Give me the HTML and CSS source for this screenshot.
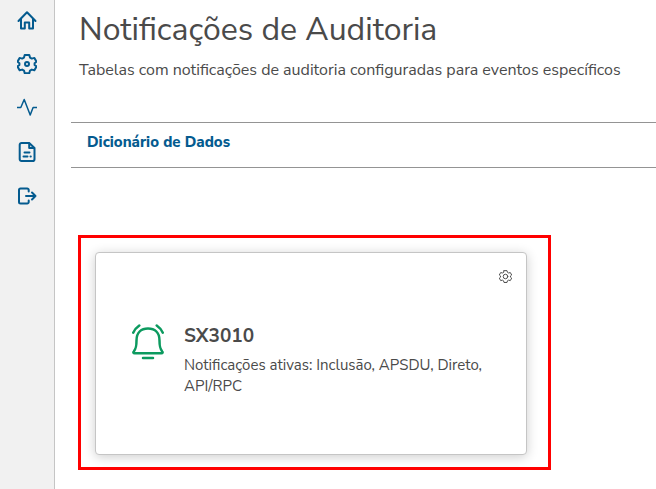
FILE: index.html
```html
<!DOCTYPE html>
<html lang="pt-BR">
<head>
  <meta charset="UTF-8">
  <meta name="viewport" content="width=device-width, initial-scale=1.0">
  <title>Notificações de Auditoria</title>
  <link rel="stylesheet" href="styles.css">
</head>
<body>
  <div class="layout">
    <nav class="sidebar">
      <a href="#" class="menu-item" aria-label="Início">
        <svg viewBox="0 0 20 20"><path d="M1.500 11 10 2.200l8.500 8.800M4 9V18.500h3.800v-6h4.400v6H16V9"/></svg>
      </a>
      <a href="#" class="menu-item" aria-label="Configurações">
        <svg viewBox="0 0 20 20"><path d="M7.700 1h4.600l.7 2.600 1.800 1 2.600-.7 2.100 3.800-1.900 1.500v1.800l1.900 1.500-2.100 3.800-2.600-.7-1.800 1-.7 2.600H7.700L7 16.600l-1.800-1-2.600.7L.5 12.500 2.400 11V9.200L.5 7.700l2.100-3.800 2.600.7 1.800-1z"/><circle cx="10" cy="10" r="2"/></svg>
      </a>
      <a href="#" class="menu-item" aria-label="Monitoramento">
        <svg viewBox="0 0 20 20" class="thin"><path d="M0 9.500h3.800L7.200 1.500l6 15.500 2.900-7.500H20"/></svg>
      </a>
      <a href="#" class="menu-item" aria-label="Relatórios">
        <svg viewBox="0 0 20 20"><path d="M4.500 1h7.700L17.500 6v11.200a1.800 1.800 0 0 1-1.800 1.800H4.500a1.800 1.800 0 0 1-1.800-1.800V2.800A1.800 1.800 0 0 1 4.500 1z"/><path d="M12.200 1.500V6h4.800M7.500 10.500h5M6.500 14.500h4M13.500 14.500h.3"/></svg>
      </a>
      <a href="#" class="menu-item" aria-label="Sair">
        <svg viewBox="0 0 20 20"><path d="M11.700 5.500V4a1.500 1.500 0 0 0-1.500-1.500H3.500A1.500 1.500 0 0 0 2 4v12a1.500 1.500 0 0 0 1.500 1.500h6.700a1.500 1.500 0 0 0 1.500-1.500v-1.500M9 10h9.500M15 6.500l3.500 3.500-3.500 3.500"/></svg>
      </a>
    </nav>

    <main class="content">
      <header class="page-header">
        <h1>Notificações de Auditoria</h1>
        <p>Tabelas com notificações de auditoria configuradas para eventos específicos</p>
      </header>

      <div class="toolbar">
        <a href="#" class="toolbar-link">Dicionário de Dados</a>
      </div>

      <section class="destaque">
        <article class="card">
          <button type="button" class="card-config" aria-label="Configurar">
            <svg viewBox="0 0 20 20"><path d="M7.700 1h4.600l.7 2.600 1.800 1 2.600-.7 2.100 3.800-1.900 1.500v1.800l1.900 1.500-2.100 3.800-2.600-.7-1.800 1-.7 2.600H7.700L7 16.600l-1.800-1-2.600.7L.5 12.500 2.400 11V9.200L.5 7.700l2.100-3.800 2.600.7 1.800-1z"/><circle cx="10" cy="10" r="3.500"/></svg>
          </button>
          <div class="card-body">
            <svg class="sino" viewBox="0 0 32 36"><path d="M4.500 16.500C4.500 8 9.500 4.500 16 4.500S27.500 8 27.500 16.500c0 7 .8 8.500 2.700 11 .8 1 .4 1.800-.8 1.800H2.600c-1.200 0-1.600-.8-.8-1.800 1.900-2.500 2.700-4 2.700-11zM11 34h10M1.200 8.700Q3 4.500 7.300 1.500M30.800 8.700Q29 4.500 24.700 1.500"/></svg>
            <div class="card-text">
              <h2>SX3010</h2>
              <p>Notificações ativas: Inclusão, APSDU, Direto, API/RPC</p>
            </div>
          </div>
        </article>
      </section>
    </main>
  </div>
</body>
</html>
```
FILE: styles.css
```css
* {
  box-sizing: border-box;
}

body {
  margin: 0;
  background: #fff;
  color: #4a4a4a;
  font-family: "Nunito Sans", Nunito, Lato, sans-serif;
  font-size: 16px;
}

h1, h2, p {
  margin: 0;
}

svg {
  display: block;
  fill: none;
  stroke: currentColor;
  stroke-width: 2;
  stroke-linecap: round;
  stroke-linejoin: round;
}

.layout {
  display: flex;
  min-height: 100vh;
}

/* menu lateral */
.sidebar {
  flex: none;
  display: flex;
  flex-direction: column;
  gap: 24px;
  align-items: center;
  width: 55px;
  padding-top: 10px;
  background: #f1f1f1;
  border-right: 1px solid #c5c5c5;
}

.menu-item {
  width: 20px;
  height: 20px;
  color: #045b8f;
}

.menu-item .thin {
  stroke-width: 1.5;
}

.content {
  flex: 1;
  min-width: 0;
  padding-left: 16px;
}

.page-header {
  padding: 8px 8px 40px;
}

.page-header h1 {
  font-size: 32px;
  font-weight: 400;
  line-height: 44px;
}

.page-header p {
  margin-top: 6px;
  line-height: 24px;
}

.toolbar {
  padding: 5px 16px 11px;
  border-top: 1px solid #949494;
  border-bottom: 1px solid #949494;
  line-height: 28px;
}

.toolbar-link {
  color: #045b8f;
  font-size: 15px;
  font-weight: 800;
  text-decoration: none;
}

.destaque {
  max-width: 473px;
  margin: 67px 8px 16px 7px;
  padding: 14px 21px 12px 14px;
  border: 3px solid #f00;
}

.card {
  display: flex;
  flex-direction: column;
  min-height: 203px;
  padding: 17px 14px;
  background: #fff;
  border: 1px solid #c5c5c5;
  border-radius: 4px;
  box-shadow: 0 2px 12px rgba(0, 0, 0, 0.2);
}

.card-config {
  align-self: flex-end;
  width: 13px;
  height: 13px;
  padding: 0;
  border: none;
  background: none;
  color: #4a4a4a;
  cursor: pointer;
}

.card-config svg {
  stroke-width: 1.5;
}

.card-body {
  display: flex;
  align-items: flex-start;
  gap: 20px;
  padding: 41px 20px 0 22px;
}

.sino {
  flex: none;
  width: 32px;
  height: 36px;
  color: #0c9a5f;
  stroke-width: 2.5;
}

.card-text h2 {
  font-size: 19px;
  font-weight: 700;
  line-height: 24px;
}

.card-text p {
  margin-top: 7px;
  font-size: 15px;
  line-height: 21px;
}
```
